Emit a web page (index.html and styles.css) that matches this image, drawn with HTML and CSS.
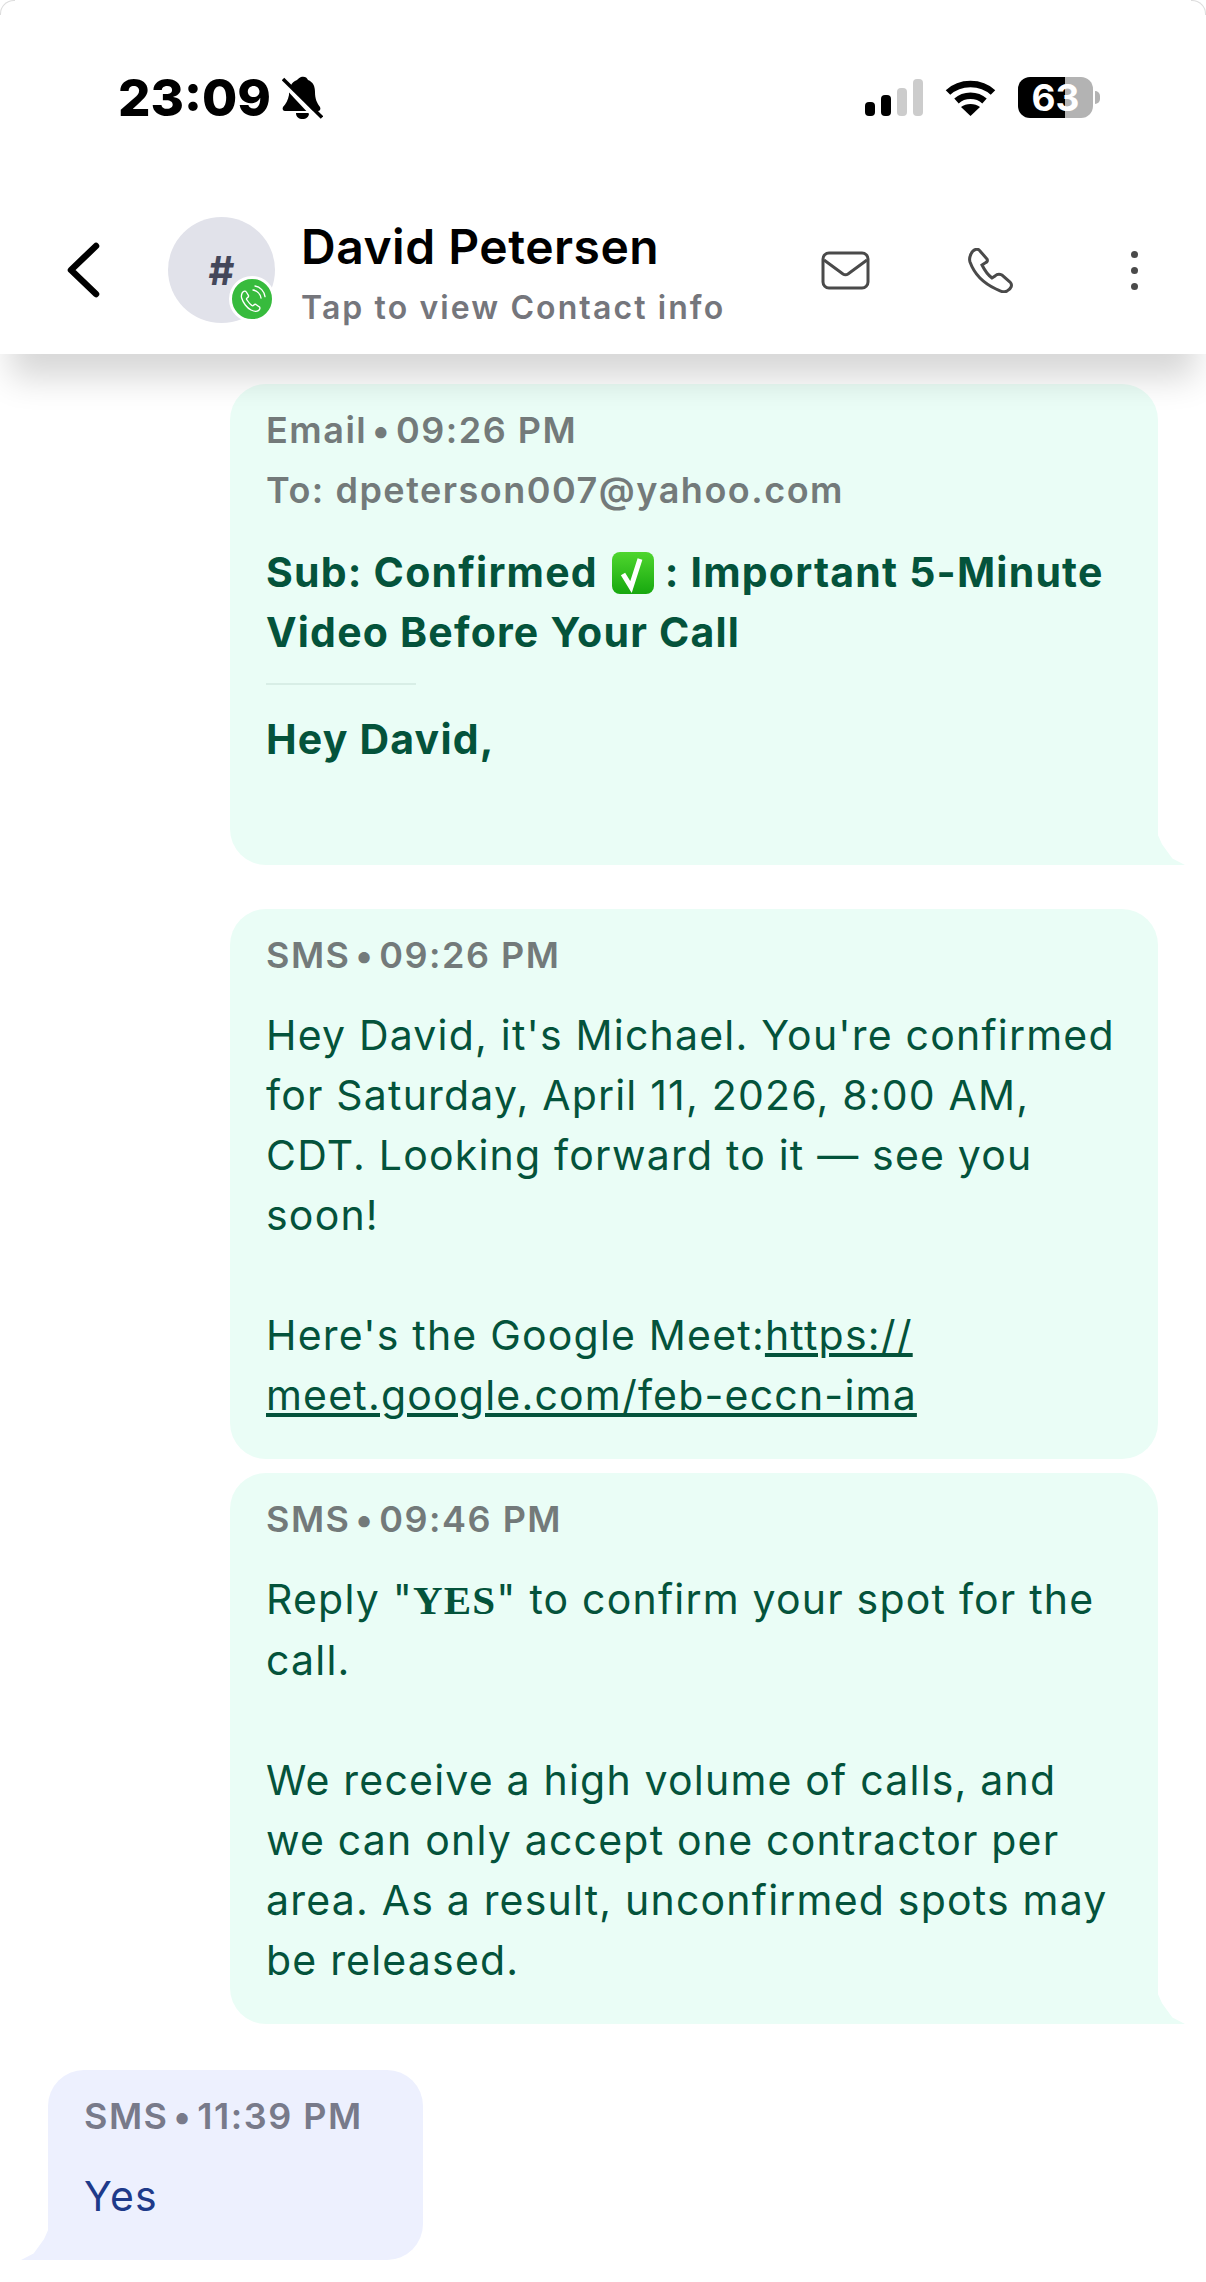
FILE: index.html
```html
<!DOCTYPE html>
<html lang="en">
<head>
    <meta charset="UTF-8">
    <title>David Petersen</title>
    <link rel="stylesheet" href="styles.css">
</head>
<body>
    <div class="screen">
        <header class="top">
            <div class="status-bar">
                <span class="time">23:09</span>
                <svg class="bell" viewBox="0 0 41 43">
                    <path d="M19 1c3-1 6 0 7 3 5 2 7 6 7 12 0 7 2 11 5 15 1 2 0 4-2 4H3c-2 0-3-2-2-4 3-3 5-7 6-12 0-7 2-13 8-15 1-1 2-2 4-3z" fill="#000"/>
                    <path d="M14 37h13c0 4-3 6-6.500 6S14 41 14 37z" fill="#000"/>
                    <path d="M-3 2L38 46" stroke="#fff" stroke-width="5"/>
                    <path d="M1 3L40 41.500" stroke="#000" stroke-width="3.500"/>
                </svg>
                <div class="status-right">
                    <div class="signal">
                        <span class="bar bar-1"></span>
                        <span class="bar bar-2"></span>
                        <span class="bar bar-3 off"></span>
                        <span class="bar bar-4 off"></span>
                    </div>
                    <svg class="wifi" viewBox="0 0 51 37">
                        <path d="M3 13.500C15 2 36 2 48 13.500" fill="none" stroke="#000" stroke-width="6.500"/>
                        <path d="M11.500 22C19 15 32 15 39.500 22" fill="none" stroke="#000" stroke-width="6.500"/>
                        <path d="M25.500 37L16 28C21 24 30 24 35 28z" fill="#000"/>
                    </svg>
                    <div class="battery">63</div>
                    <div class="battery-nub"></div>
                </div>
            </div>
            <nav class="nav">
                <svg class="back" viewBox="0 0 33 56">
                    <path d="M29 4L4 28l25 24" fill="none" stroke="#000" stroke-width="6.500" stroke-linecap="round" stroke-linejoin="round"/>
                </svg>
                <div class="avatar">
                    #
                    <span class="badge">
                        <svg viewBox="0 0 45 45">
                            <path d="M8 13c2-3 5-3 6-1l3 5c1 1 0 3-2 4-1 1-1 2 0 3 2 3 4 6 7 8 1 1 2 1 3 0 1-2 3-2 4-1l4 3c2 1 2 4-1 6-3 2-7 1-11-1C15 36 9 28 7 21c-1-3 0-6 1-8z" fill="none" stroke="#fff" stroke-width="2"/>
                            <path d="M24 9c6 1 11 6 12 12M27 3c8 1 14 8 15 16" fill="none" stroke="#fff" stroke-width="2" stroke-linecap="round"/>
                        </svg>
                    </span>
                </div>
                <div class="contact">
                    <div class="contact-name">David Petersen</div>
                    <div class="contact-sub">Tap to view Contact info</div>
                </div>
                <svg class="icon-mail" viewBox="0 0 49 39">
                    <rect x="2" y="2" width="45" height="35" rx="6" fill="none" stroke="#4a4a4a" stroke-width="3"/>
                    <path d="M3 9l19 14c1.500 1 3.500 1 5 0L46 9" fill="none" stroke="#4a4a4a" stroke-width="3"/>
                </svg>
                <svg class="icon-phone" viewBox="0 0 45 45">
                    <path d="M3 6C5 1 10 0 12 3l7 8c1 2 0 3-2 4l-3 2c3 6 6 10 10 13l3-2c2-2 5-2 7-1l8 7c3 3 1 7-3 9-3 2-7 0-11-2C15 35 6 25 2 14 1 11 2 8 3 6z" fill="none" stroke="#4a4a4a" stroke-width="3"/>
                </svg>
                <div class="dots">
                    <span></span>
                    <span></span>
                    <span></span>
                </div>
            </nav>
        </header>

        <main class="thread">
            <div class="bubble out tail">
                <div class="meta">Email <span class="sep">•</span> 09:26 PM</div>
                <div class="meta to">To: dpeterson007@yahoo.com</div>
                <div class="subject">Sub: Confirmed <svg class="check" viewBox="0 0 42 42"><defs><linearGradient id="check-fill" x1="0" y1="0" x2="0" y2="1"><stop offset="0" stop-color="#4fd62e"/><stop offset="1" stop-color="#17a80f"/></linearGradient></defs><rect width="42" height="42" rx="8" fill="url(#check-fill)"/><path d="M11 22l8 13 9-28" fill="none" stroke="#fff" stroke-width="5"/></svg> : Important 5-Minute Video Before Your Call</div>
                <div class="rule"></div>
                <div class="greeting">Hey David,</div>
            </div>

            <div class="bubble out close-next">
                <div class="meta">SMS <span class="sep">•</span> 09:26 PM</div>
                <div class="body">Hey David, it's Michael. You're confirmed for Saturday, April 11, 2026, 8:00 AM, CDT. Looking forward to it — see you soon!<br><br>Here's the Google Meet:<a href="#">https://<br>meet.google.com/feb-eccn-ima</a></div>
            </div>

            <div class="bubble out tail">
                <div class="meta">SMS <span class="sep">•</span> 09:46 PM</div>
                <div class="body">Reply "<b class="serif">YES</b>" to confirm your spot for the call.<br><br>We receive a high volume of calls, and we can only accept one contractor per area. As a result, unconfirmed spots may be released.</div>
            </div>

            <div class="bubble in tail">
                <div class="meta">SMS <span class="sep">•</span> 11:39 PM</div>
                <div class="body">Yes</div>
            </div>
        </main>
    </div>
</body>
</html>
```

FILE: styles.css
```css
* {
    box-sizing: border-box;
}

body {
    margin: 0;
    font-family: 'Inter', 'Liberation Sans', sans-serif;
    background-color: #ffffff;
    overflow: hidden;
}

.screen {
    position: relative;
    height: 2282px;
    overflow: hidden;
    background: #ffffff;
}

/* thin arc left in the two top corners */
.screen::before,
.screen::after {
    content: "";
    position: absolute;
    z-index: 3;
    top: 0;
    width: 14px;
    height: 14px;
    border-top: 1px solid #dddddd;
}

.screen::before {
    left: 0;
    border-left: 1px solid #dddddd;
    border-radius: 14px 0 0 0;
}

.screen::after {
    right: 0;
    border-right: 1px solid #dddddd;
    border-radius: 0 14px 0 0;
}

.top {
    position: relative;
    z-index: 2;
    height: 354px;
    padding-top: 76px;
    background: #ffffff;
    box-shadow: 0 34px 32px -10px rgba(0, 0, 0, 0.16);
}

.status-bar {
    display: flex;
    align-items: center;
    height: 43px;
    padding: 0 106px 0 118px;
}

.time {
    font-size: 51px;
    font-weight: 800;
    color: #000;
    line-height: 43px;
}

.bell {
    width: 41px;
    height: 43px;
    margin-left: 11px;
}

.status-right {
    display: flex;
    align-items: center;
    margin-left: auto;
}

.signal {
    display: flex;
    align-items: flex-end;
    gap: 6px;
    height: 37px;
}

.bar {
    width: 10px;
    border-radius: 4px;
    background: #000;
}

.bar.off {
    background: #cccccc;
}

.bar-1 { height: 14px; }
.bar-2 { height: 21px; }
.bar-3 { height: 28px; }
.bar-4 { height: 37px; }

.wifi {
    width: 51px;
    height: 37px;
    margin-left: 22px;
}

.battery {
    display: flex;
    align-items: center;
    justify-content: center;
    width: 75px;
    height: 41px;
    margin-left: 22px;
    border-radius: 12px;
    background: linear-gradient(90deg, #000 0, #000 47px, #b3b3b3 47px);
    color: #ffffff;
    font-size: 37px;
    font-weight: 700;
}

.battery-nub {
    width: 5px;
    height: 13px;
    margin-left: 2px;
    border-radius: 0 6px 6px 0;
    background: #b3b3b3;
}

.nav {
    display: flex;
    align-items: center;
    height: 106px;
    margin-top: 98px;
    padding: 0 68px 0 67px;
}

.back {
    flex: none;
    width: 33px;
    height: 56px;
}

.avatar {
    position: relative;
    flex: none;
    display: flex;
    align-items: center;
    justify-content: center;
    width: 107px;
    height: 106px;
    margin-left: 68px;
    border-radius: 50%;
    background: #e1e2ea;
    color: #44475a;
    font-size: 40px;
    font-weight: 700;
}

.badge {
    position: absolute;
    right: 0;
    bottom: 1px;
    width: 46px;
    height: 46px;
    padding: 5px;
    border: 3px solid #ffffff;
    border-radius: 50%;
    background: #37bb3d;
}

.badge svg {
    display: block;
    width: 100%;
    height: 100%;
}

.contact {
    flex: 1;
    margin-left: 26px;
    padding-top: 9px;
}

.contact-name {
    font-size: 48px;
    font-weight: 600;
    line-height: 56px;
    letter-spacing: 0.5px;
    color: #000;
}

.contact-sub {
    margin-top: 11px;
    font-size: 32px;
    font-weight: 600;
    line-height: 44px;
    letter-spacing: 2.1px;
    color: #75767c;
}

.icon-mail {
    flex: none;
    width: 49px;
    height: 39px;
}

.icon-phone {
    flex: none;
    width: 45px;
    height: 45px;
    margin-left: 98px;
}

.dots {
    flex: none;
    display: flex;
    flex-direction: column;
    gap: 9px;
    margin-left: 118px;
}

.dots span {
    width: 7px;
    height: 7px;
    border-radius: 50%;
    background: #4a4a4a;
}

.thread {
    display: flex;
    flex-direction: column;
    padding: 30px 48px 0;
}

.bubble {
    position: relative;
    margin-bottom: 44px;
    padding: 24px 40px 34px 36px;
    font-size: 41px;
    line-height: 60px;
    letter-spacing: 1.2px;
}

.bubble.close-next {
    margin-bottom: 14px;
}

.bubble.out {
    align-self: flex-end;
    width: 928px;
    background: #eafdf6;
    color: #04533b;
    border-radius: 36px;
}

.bubble.in {
    align-self: flex-start;
    margin-top: 2px;
    padding-right: 60px;
    background: #edf0fe;
    color: #1e3a8a;
    border-radius: 36px;
}

.bubble.out.tail {
    border-bottom-right-radius: 0;
}

.bubble.in.tail {
    border-bottom-left-radius: 0;
}

.bubble.tail::after {
    content: "";
    position: absolute;
    bottom: 0;
    width: 28px;
    height: 32px;
    background: inherit;
}

.bubble.out.tail::after {
    right: -27px;
    clip-path: polygon(0 0, 18% 35%, 55% 80%, 100% 100%, 0 100%);
}

.bubble.in.tail::after {
    left: -27px;
    clip-path: polygon(100% 0, 82% 35%, 45% 80%, 0 100%, 100% 100%);
}

.meta {
    font-size: 36px;
    font-weight: 600;
    line-height: 44px;
    letter-spacing: 1.5px;
    color: #737a7a;
}

.sep {
    margin: 0 -6px;
}

.in .meta {
    color: #787a8a;
}

.meta.to {
    margin-top: 16px;
}

.subject {
    margin-top: 30px;
    font-weight: 700;
}

.check {
    width: 42px;
    height: 42px;
    margin-left: 3px;
    vertical-align: -7px;
}

.rule {
    width: 150px;
    height: 2px;
    margin: 21px 0 24px;
    background: #d8eee6;
}

.greeting {
    margin-bottom: 62px;
    font-weight: 700;
}

.body {
    margin-top: 28px;
}

.body a {
    color: inherit;
    text-decoration: underline;
}

.serif {
    font-family: 'Liberation Serif', serif;
}
```
